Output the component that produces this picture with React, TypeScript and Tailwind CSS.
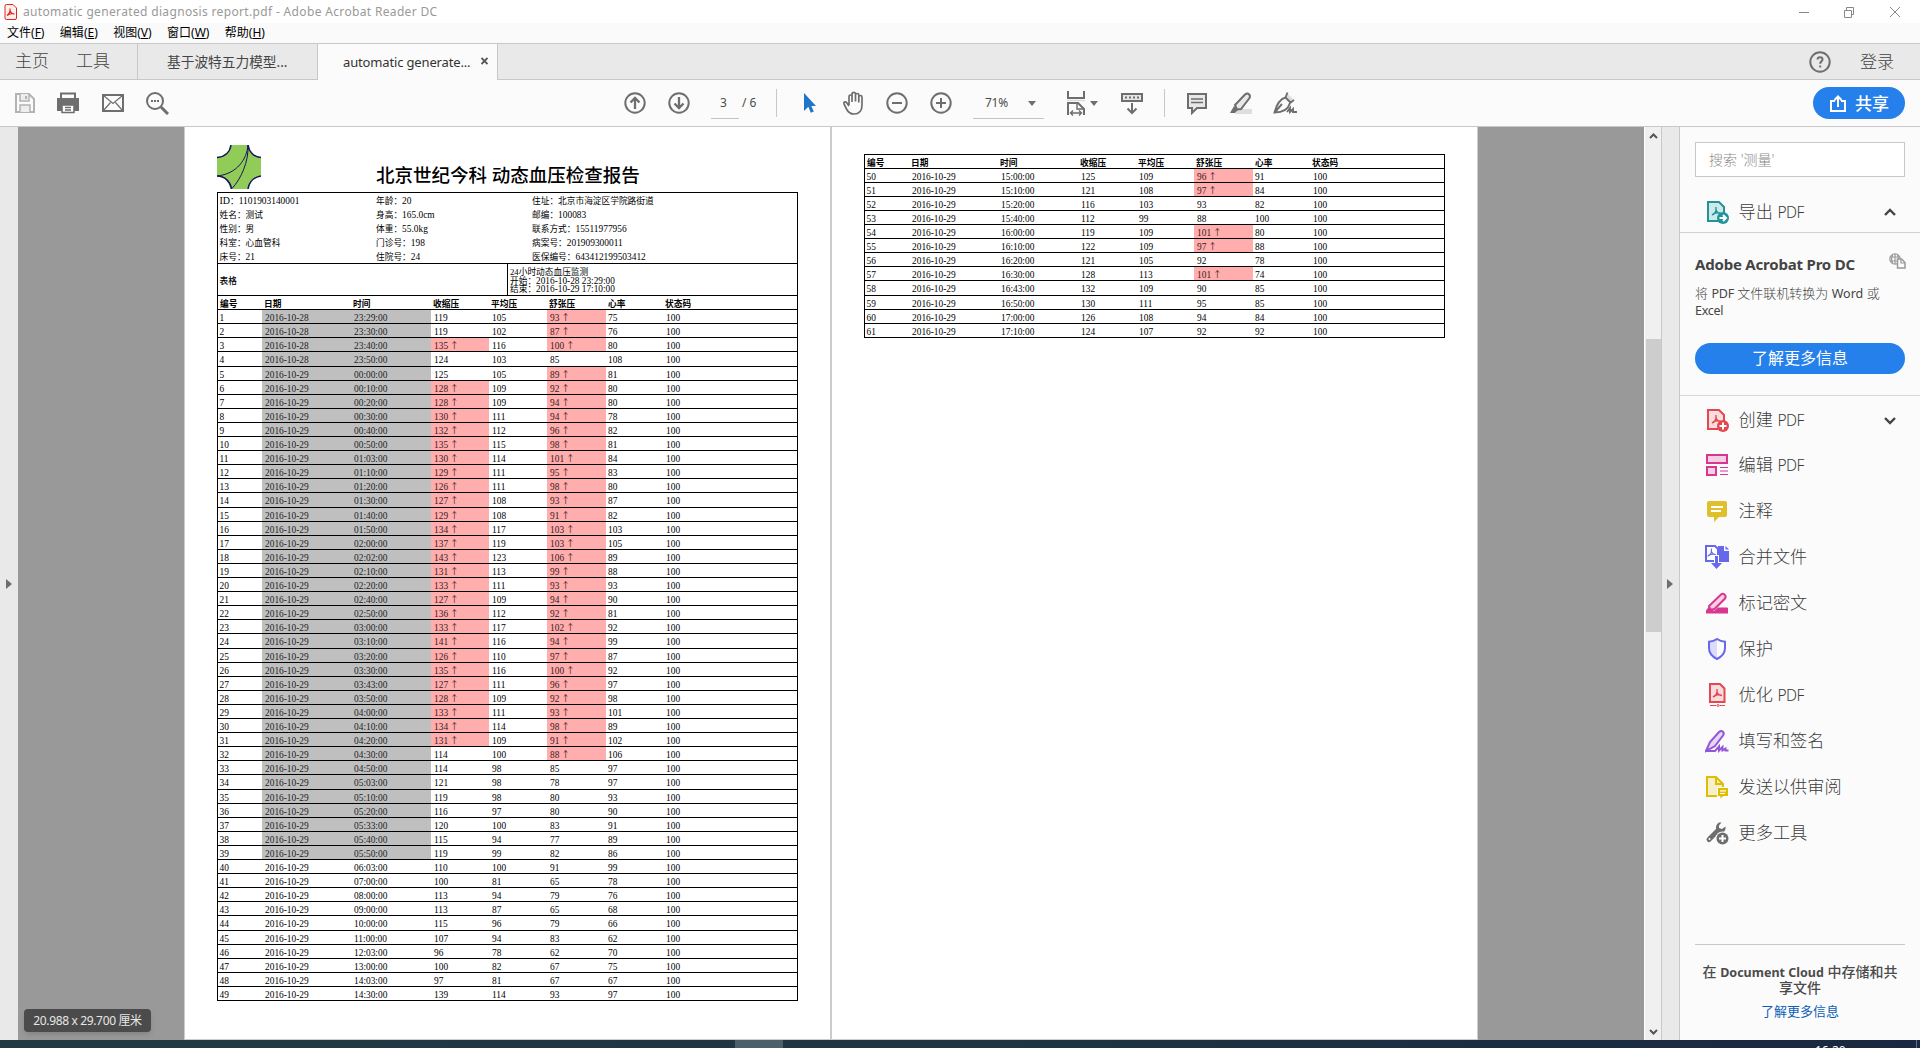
import React from "react";

type Row = [string, string, string, string, string, string];

// number is implied by position; values: time, systolic, mean, diastolic, heart rate, flags
// flags: "s" marks a raised systolic value, "d" a raised diastolic value
const readings: Row[] = [
  ["23:29:00", "119", "105", "93", "75", "d"],
  ["23:30:00", "119", "102", "87", "76", "d"],
  ["23:40:00", "135", "116", "100", "80", "sd"],
  ["23:50:00", "124", "103", "85", "108", ""],
  ["00:00:00", "125", "105", "89", "81", "d"],
  ["00:10:00", "128", "109", "92", "80", "sd"],
  ["00:20:00", "128", "109", "94", "80", "sd"],
  ["00:30:00", "130", "111", "94", "78", "sd"],
  ["00:40:00", "132", "112", "96", "82", "sd"],
  ["00:50:00", "135", "115", "98", "81", "sd"],
  ["01:03:00", "130", "114", "101", "84", "sd"],
  ["01:10:00", "129", "111", "95", "83", "sd"],
  ["01:20:00", "126", "111", "98", "80", "sd"],
  ["01:30:00", "127", "108", "93", "87", "sd"],
  ["01:40:00", "129", "108", "91", "82", "sd"],
  ["01:50:00", "134", "117", "103", "103", "sd"],
  ["02:00:00", "137", "119", "103", "105", "sd"],
  ["02:02:00", "143", "123", "106", "89", "sd"],
  ["02:10:00", "131", "113", "99", "88", "sd"],
  ["02:20:00", "133", "111", "93", "93", "sd"],
  ["02:40:00", "127", "109", "94", "90", "sd"],
  ["02:50:00", "136", "112", "92", "81", "sd"],
  ["03:00:00", "133", "117", "102", "92", "sd"],
  ["03:10:00", "141", "116", "94", "99", "sd"],
  ["03:20:00", "126", "110", "97", "87", "sd"],
  ["03:30:00", "135", "116", "100", "92", "sd"],
  ["03:43:00", "127", "111", "96", "97", "sd"],
  ["03:50:00", "128", "109", "92", "98", "sd"],
  ["04:00:00", "133", "111", "93", "101", "sd"],
  ["04:10:00", "134", "114", "98", "89", "sd"],
  ["04:20:00", "131", "109", "91", "102", "sd"],
  ["04:30:00", "114", "100", "88", "106", "d"],
  ["04:50:00", "114", "98", "85", "97", ""],
  ["05:03:00", "121", "98", "78", "97", ""],
  ["05:10:00", "119", "98", "80", "93", ""],
  ["05:20:00", "116", "97", "80", "90", ""],
  ["05:33:00", "120", "100", "83", "91", ""],
  ["05:40:00", "115", "94", "77", "89", ""],
  ["05:50:00", "119", "99", "82", "86", ""],
  ["06:03:00", "110", "100", "91", "99", ""],
  ["07:00:00", "100", "81", "65", "78", ""],
  ["08:00:00", "113", "94", "79", "76", ""],
  ["09:00:00", "113", "87", "65", "68", ""],
  ["10:00:00", "115", "96", "79", "66", ""],
  ["11:00:00", "107", "94", "83", "62", ""],
  ["12:03:00", "96", "78", "62", "70", ""],
  ["13:00:00", "100", "82", "67", "75", ""],
  ["14:03:00", "97", "81", "67", "67", ""],
  ["14:30:00", "139", "114", "93", "97", ""],
  ["15:00:00", "125", "109", "96", "91", "d"],
  ["15:10:00", "121", "108", "97", "84", "d"],
  ["15:20:00", "116", "103", "93", "82", ""],
  ["15:40:00", "112", "99", "88", "100", ""],
  ["16:00:00", "119", "109", "101", "80", "d"],
  ["16:10:00", "122", "109", "97", "88", "d"],
  ["16:20:00", "121", "105", "92", "78", ""],
  ["16:30:00", "128", "113", "101", "74", "d"],
  ["16:43:00", "132", "109", "90", "85", ""],
  ["16:50:00", "130", "111", "95", "85", ""],
  ["17:00:00", "126", "108", "94", "84", ""],
  ["17:10:00", "124", "107", "92", "92", ""],
];

const columns = "grid grid-cols-[44px_89px_80px_58px_58px_59px_57px_1fr]";

function Up() {
  return <span className="font-['Noto_Sans_CJK_SC'] text-[8.7px] leading-none"> ↑</span>;
}

// phase shifts where the 14.1px row pitch rounds up to a taller row
function Table({ from, to, phase }: { from: number; to: number; phase: number }) {
  const edge = (i: number) => Math.floor((i * 141) / 10 + phase);
  const cell = "min-h-0 overflow-hidden whitespace-nowrap pl-[3px] pt-px leading-[14px]";
  return (
    <div className="text-[9.4px] text-black">
      <div className={columns + " h-[14px] border-b border-black text-[8.7px] font-bold"}>
        {["编号", "日期", "时间", "收缩压", "平均压", "舒张压", "心率", "状态码"].map((h) => (
          <div key={h} className="min-h-0 pl-[2px] pt-px leading-[14px]">{h}</div>
        ))}
      </div>
      {readings.slice(from, to).map((r, i) => {
        const n = from + i + 1;
        const night = n <= 39 ? " bg-[#bfbfbf] text-[#222]" : "";
        const high = (on: boolean) => (on ? " bg-[#ffadad] text-[#3c1a20]" : "");
        return (
          <div
            key={n}
            className={columns + " grid-rows-[100%] border-b border-black last:border-b-0"}
            style={{ height: edge(i + 2) - edge(i + 1) - (n === to ? 1 : 0) }}
          >
            <div className="pl-[1.5px] pt-px leading-[14px]">{n}</div>
            <div className={cell + night}>{n <= 4 ? "2016-10-28" : "2016-10-29"}</div>
            <div className={cell + night}>{r[0]}</div>
            <div className={cell + high(r[5].includes("s"))}>{r[1]}{r[5].includes("s") && <Up />}</div>
            <div className={cell}>{r[2]}</div>
            <div className={cell + high(r[5].includes("d"))}>{r[3]}{r[5].includes("d") && <Up />}</div>
            <div className="pl-[2px] pt-px leading-[14px]">{r[4]}</div>
            <div className={cell}>100</div>
          </div>
        );
      })}
    </div>
  );
}

function Info({ items }: { items: [string, string][] }) {
  return (
    <div className="text-[8.7px] leading-[14px]">
      {items.map(([k, v]) => (
        <div key={k} className="h-[14px] whitespace-nowrap">
          <span className={k === "ID" ? "text-[10px]" : ""}>{k}</span>：<span className={/^[\x00-\x7f]+$/.test(v) ? "text-[9.4px]" : ""}>{v}</span>
        </div>
      ))}
    </div>
  );
}

function Svg({ w = 24, h = 24, children, c = "#6e6e6e" }: { w?: number; h?: number; children: React.ReactNode; c?: string }) {
  return (
    <svg width={w} height={h} viewBox={`0 0 ${w} ${h}`} fill="none" stroke={c} strokeWidth="2" className="block shrink-0">
      {children}
    </svg>
  );
}

const acro = "M8 15c2.500-1 4.500-4 4-8M12 10c1 2.500 3 3.500 5 3.500M8 15c1.500-2 5-2.500 8-2";

function Toolbar() {
  return (
    <div className="flex h-[47px] shrink-0 items-center border-b border-[#c8c8c8] bg-[#fbfbfb]">
      <div className="flex w-[624px] items-center pl-[13px]">
        <Svg c="#b3b3b3"><path d="M3 3h13l5 5v13H3z" /><path d="M7 3v7h9V3M7 21v-7h10v7" strokeWidth="1.500" fill="#eee" /><path d="M13 5v3" /></Svg>
        <div className="w-[19px]" />
        <Svg><path d="M5 7V2.500h14V7" /><path d="M2 8h20v11h-3v-5H5v5H2z" fill="#6e6e6e" /><path d="M6 14h12v7.500H6zM9 16.500h6M9 19h6" strokeWidth="1.500" fill="#fff" /></Svg>
        <div className="w-[21px]" />
        <Svg><path d="M2 4h20v16H2z" /><path d="M2.500 4.500l9.500 8 9.500-8M2.500 19.500l7-8M21.500 19.500l-7-8" strokeWidth="1.200" /></Svg>
        <div className="w-[20px]" />
        <Svg><circle cx="10" cy="10" r="8" /><path d="M16 16l7 7" strokeWidth="3" /><path d="M6 10h2M9 10h2M12 10h2" /></Svg>
      </div>
      <Svg w={22} h={22}><circle cx="11" cy="11" r="9.700" /><path d="M11 17V6M6.500 10.500L11 6l4.500 4.500" strokeWidth="2.300" /></Svg>
      <div className="w-[22px]" />
      <Svg w={22} h={22}><circle cx="11" cy="11" r="9.700" /><path d="M11 5v11M6.500 11.500L11 16l4.500-4.500" strokeWidth="2.300" /></Svg>
      <div className="ml-[21px] mt-[3px] h-[28px] w-[28px] border-b border-[#c4c4c4] pr-[3px] text-center text-[12px] leading-[23px] text-[#4b4b4b]">3</div>
      <div className="ml-[3px] w-[34px] text-[12px] leading-[20px] text-[#4b4b4b]">/ 6</div>
      <div className="h-[28px] w-px bg-[#c8c8c8]" />
      <div className="w-[26px]" />
      <Svg w={14} h={22}><path d="M1 1v18l4.300-4.200 2.500 6 3-1.300-2.500-5.500H13z" fill="#2074c9" stroke="none" /></Svg>
      <div className="w-[25px]" />
      <Svg w={24} h={24}><path d="M7 14V5.500c0-2 3-2 3 0V11M10 10V3c0-2.300 3.500-2.300 3.500 0v7.500M13.500 10V4c0-2 3.300-2 3.300 0v7.500M16.800 11V6c0-2 3.200-2 3.200 0v8c0 6-2.500 9-8 9-4 0-6-2-7.500-5L2 13c-.8-2.200 1.600-3 2.800-1.200L7 15" strokeWidth="1.700" /></Svg>
      <div className="w-[20px]" />
      <Svg w={22} h={22}><circle cx="11" cy="11" r="9.700" /><path d="M6 11h10" /></Svg>
      <div className="w-[22px]" />
      <Svg w={22} h={22}><circle cx="11" cy="11" r="9.700" /><path d="M6 11h10M11 6v10" /></Svg>
      <div className="ml-[21px] mt-[3px] flex h-[28px] w-[71px] items-start justify-between border-b border-[#c4c4c4] pl-[12px] pr-[8px] text-[12px] leading-[23px] tracking-[-0.3px] text-[#4b4b4b]">
        71%<svg width="8" height="5" className="mt-[10px]"><path d="M0 0h8L4 5z" fill="#6e6e6e" /></svg>
      </div>
      <div className="w-[22px]" />
      <Svg w={20} h={26}><path d="M2 1v7h16V1M2 25V13h10l6 6v6" /><path d="M1 10.500h18" stroke="#ddd" strokeWidth="1.500" /><path d="M11 13v6h7M5 23h10M7 20.500L4.500 23 7 25.500M13 20.500l2.500 2.500-2.500 2.500" strokeWidth="1.400" /></Svg>
      <svg width="8" height="5" className="ml-[4px]"><path d="M0 0h8L4 5z" fill="#6e6e6e" /></svg>
      <div className="w-[22px]" />
      <Svg w={24} h={24}><path d="M2 3h20v7H2z" fill="#e5e5e5" /><path d="M5 6.500h14" strokeDasharray="2 2" /><path d="M12 12v10M7.500 17.500L12 22l4.500-4.500" /></Svg>
      <div className="w-[20px]" />
      <div className="h-[28px] w-px bg-[#c8c8c8]" />
      <div className="w-[20px]" />
      <Svg w={24} h={24}><path d="M3 3h18v14h-9l-5 5v-5H3z" fill="#e8e8e8" /><path d="M6 8h12M6 11.500h12" strokeWidth="1.500" /></Svg>
      <div className="w-[20px]" />
      <Svg w={24} h={24}><path d="M10 18h13v5H6z" fill="#dedede" stroke="none" /><path d="M6 14L16 3.500c3-2.500 6 .5 4.500 3.500L12 18l-4 .5z" fill="#e8e8e8" /><path d="M5 15l-4 7h5l3-3z" fill="#6e6e6e" stroke="none" /></Svg>
      <div className="w-[20px]" />
      <Svg w={25} h={24}><path d="M14 2l7 7-4 2-5-5z" fill="#ddd" stroke="none" /><path d="M14.500 1.500l-2 5C7 8 4 12 1.500 21.500 9 21.500 15 19 17 12l4-3M12.500 6.500l5 5M2 21l7-8" strokeWidth="1.900" /><path d="M14 21l3-4v4l3-3v3h4" strokeWidth="1.900" /></Svg>
      <div className="ml-auto mr-[15px] flex h-[32px] w-[92px] items-center rounded-full bg-[#2680eb] pl-[17px] text-[17px] font-medium text-white">
        <svg width="16" height="17" fill="none" stroke="white" strokeWidth="2"><path d="M5 6H1v10h14V6h-4M8 12V1.500M4.500 5L8 1.500 11.500 5" /></svg>
        <span className="ml-[9px] leading-none">共享</span>
      </div>
    </div>
  );
}

function Tool({ icon, label, chevron }: { icon: React.ReactNode; label: string; chevron?: "up" | "down" }) {
  return (
    <div className="flex h-[46px] shrink-0 items-center pl-[25px] text-[17.2px] font-light leading-[24px] text-[#3c3c3c]">
      {icon}
      <span className="ml-[9.500px] whitespace-nowrap">
        {label.split(" ")[0]}
        {label.includes(" ") && <span className="ml-[4.500px] font-['Noto_Sans'] text-[15.500px] font-light tracking-[-0.5px]">PDF</span>}
      </span>
      {chevron && (
        <svg width="14" height="9" fill="none" stroke="#444" strokeWidth="2.400" className="ml-auto mr-[23px]">
          <path d={chevron === "up" ? "M2 7l5-5 5 5" : "M2 2l5 5 5-5"} />
        </svg>
      )}
    </div>
  );
}

function Sidebar() {
  const plus = "M16.500 13v7M13 16.500h7";
  return (
    <div className="flex w-[240px] shrink-0 flex-col bg-[#fbfbfb]">
      <div className="mx-[15px] mt-[15px] h-[35px] shrink-0 border border-[#c8c8c8] bg-white pl-[13px] text-[14px] font-light leading-[33px] text-[#8a8a8a]">搜索 '测量'</div>
      <div className="mt-[12px] h-[44px] border-b border-[#d0d0d0]">
        <Tool label="导出 PDF" chevron="up" icon={
          <Svg c="#209499"><path d="M3 2h11l5 5v14H3z" fill="#cfe9ea" /><path d={acro} strokeWidth="1.400" transform="translate(-1 0)" /><circle cx="18" cy="18" r="6" fill="#209499" stroke="none" /><path d="M14.500 18h6M18 15l3 3-3 3" stroke="#fff" /></Svg>} />
      </div>
      <div className="mt-[21px] flex pl-[15px]">
        <div className="w-[194px] whitespace-nowrap font-['Noto_Sans'] text-[15px] font-bold leading-[20px] tracking-[-0.2px] text-[#444]">Adobe Acrobat Pro DC</div>
        <svg width="17" height="16" viewBox="0 0 17 16" fill="none" stroke="#999" strokeWidth="1.200" className="-mt-px">
          <circle cx="6" cy="6" r="5.200" /><path d="M1 4h10M1 8h7M6 1v10M3.500 2c-1.500 3-1.500 5 0 8M8.500 2c1 2 1.200 3 1 4" /><path d="M8.500 6h4l3.500 3.500V15H8.500z" fill="#fbfbfb" strokeWidth="1.500" /><path d="M12 6v4h4" />
        </svg>
      </div>
      <div className="ml-[15px] mt-[11px] w-[200px] text-[13px] font-light leading-[17px] text-[#444]">
        将 <span className="font-['Noto_Sans'] text-[12.500px] font-normal tracking-[-0.2px]">PDF</span> 文件联机转换为 <span className="font-['Noto_Sans'] text-[12.500px] font-normal">Word</span> 或<br />
        <span className="font-['Noto_Sans'] text-[12.500px] font-normal tracking-[-0.3px]">Excel</span>
      </div>
      <div className="mx-[15px] mt-[24px] h-[31px] rounded-full bg-[#2680eb] text-center text-[16px] leading-[30px] text-white">了解更多信息</div>
      <div className="mt-[21px] h-px bg-[#d8d8d8]" />
      <div className="flex flex-col">
        <div className="-mb-px pt-px">
          <Tool label="创建 PDF" chevron="down" icon={
            <Svg c="#e34850"><path d="M3 2h11l5 5v14H3z" fill="#f9dcdd" /><path d={acro} strokeWidth="1.400" transform="translate(-1 0)" /><circle cx="18" cy="18" r="6" fill="#e34850" stroke="none" /><path d={plus} stroke="#fff" transform="translate(1.500 1.500)" /></Svg>} />
        </div>
        <Tool label="编辑 PDF" icon={
          <Svg c="#d83790"><path d="M2 2h20v8H2zM2 14h9v8H2z" fill="#f5cfe3" /><path d="M15 14.500h8M15 18h8M15 21.500h8" strokeWidth="1.200" /></Svg>} />
        <Tool label="注释" icon={
          <Svg c="none"><path d="M3 2h16a2 2 0 012 2v12a2 2 0 01-2 2h-6l-5 5v-5H3a2 2 0 01-2-2V4a2 2 0 012-2z" fill="#dfbf2b" transform="translate(1 0)" /><path d="M6 8h12M6 12h10" stroke="#fff" /></Svg>} />
        <Tool label="合并文件" icon={
          <Svg c="#6767ec"><path d="M1 1h9l3 3v12H1z" fill="#fff" /><path d={acro} strokeWidth="1.200" transform="translate(-5 -3) scale(.95)" /><path d="M13 1h6v5h5v11H13z" fill="#6767ec" stroke="none" /><path d="M20.500 1l3.500 3.500h-3.500z" fill="#6767ec" stroke="none" /><path d="M11.500 10v9" stroke="#fff" strokeWidth="5" /><path d="M11.500 11v8" strokeWidth="3" /><path d="M6 18h11l-5.500 6z" fill="#6767ec" stroke="none" /></Svg>} />
        <Tool label="标记密文" icon={
          <Svg c="#d83790"><path d="M5 19l-1-4L16 3.500c2.500-2 6 1 4 4L9.500 18z" fill="#f5cfe3" /><path d="M1 22.500v-3l3-4 5 4.500 4-3.500h9a1 1 0 011 1v5z" fill="#d83790" stroke="none" /></Svg>} />
        <Tool label="保护" icon={
          <Svg c="#6767ec"><path d="M12 2.500v19C7 19 4 16.500 4 12V5c3 0 6-1 8-2.500z" fill="#dcdcfa" stroke="none" /><path d="M12 2c2.500 1.700 5 2.500 8 2.700V11c0 5.500-3 8.500-8 11-5-2.500-8-5.500-8-11V4.700C7 4.500 9.500 3.700 12 2z" /></Svg>} />
        <Tool label="优化 PDF" icon={
          <Svg c="#e34850"><path d="M5 1h10l4.500 4.500V19H5z" fill="#f9dcdd" /><path d={acro} strokeWidth="1.400" transform="translate(0 -1)" /><path d="M5 22.500h6M14.500 22.500H20" strokeWidth="1" /><circle cx="13" cy="22.500" r="1" strokeWidth="1" /></Svg>} />
        <Tool label="填写和签名" icon={
          <Svg c="#9256d9"><path d="M1 22l4-9 9-10c3-2.500 6 .5 4 3.500L10 17z" fill="#e6d8f6" /><path d="M1 22h9l4-4.500v4l3.500-3.500v3.500l3-2v2h3" /></Svg>} />
        <Tool label="发送以供审阅" icon={
          <Svg c="#ddbe00"><path d="M2 2h9l7 7v12H2z" fill="#f7efc9" /><path d="M11 2v7h7" /><path d="M12.500 12.500h11v9H18l-3 3v-3h-2.500z" fill="#ddbe00" stroke="#fbfbfb" strokeWidth="1" /><path d="M15 15.800h6M15 18.500h5" stroke="#fff" strokeWidth="1.200" /></Svg>} />
        <Tool label="更多工具" icon={
          <Svg><path d="M4 18.500L13 9.500" strokeWidth="5" strokeLinecap="round" /><path d="M14 1.500c-4 2-4 8 0 10 4 1 7-1 6.500-6L17 8l-3-1 0-2.500 2.500-3z" fill="#6e6e6e" stroke="none" /><circle cx="4.500" cy="18" r="1" fill="#fff" stroke="none" /><circle cx="17.500" cy="17.500" r="7" fill="#fbfbfb" stroke="none" /><circle cx="17.500" cy="17.500" r="6" fill="#6e6e6e" stroke="none" /><path d={plus} stroke="#fff" transform="translate(1 1)" /></Svg>} />
      </div>
      <div className="mx-[15px] mt-auto border-t border-[#c8c8c8] pt-[20px] text-center text-[14px] font-medium leading-[14.500px] text-[#4b4b4b]">
        在 <span className="font-['Noto_Sans'] text-[12.500px] font-bold">Document Cloud</span> 中存储和共<br />享文件
      </div>
      <div className="mb-[21px] mt-[8px] text-center text-[13px] leading-[16px] text-[#0d5fb8]">了解更多信息</div>
    </div>
  );
}

export default function App() {
  const menus = [["文件", "F"], ["编辑", "E"], ["视图", "V"], ["窗口", "W"], ["帮助", "H"]];
  return (
    <div className="flex h-[1048px] w-[1920px] flex-col overflow-hidden bg-white font-['Noto_Sans','Noto_Sans_CJK_SC',sans-serif]">
      <div className="flex h-[23px] shrink-0 items-center pl-[4px]">
        <svg width="13" height="16" viewBox="0 0 13 16" fill="none" stroke="#e1251b"><path d="M1 2a1.500 1.500 0 011.500-1.500H9l3.500 3.500v10a1.500 1.500 0 01-1.500 1.500H2.500A1.500 1.500 0 011 14z" fill="#fff0ef" /><path d="M3 11.500C5 10 6.500 7 6 4.500M6 7c1 2 2.500 3 4.500 3M3 11.500c2-1.500 5-2 7-1.500" strokeWidth="1.200" /></svg>
        <span className="ml-[6px] whitespace-nowrap text-[12px] tracking-[0.34px] text-[#999]">automatic generated diagnosis report.pdf - Adobe Acrobat Reader DC</span>
        <svg width="104" height="12" fill="none" stroke="#888" className="ml-auto mr-[18px]"><path d="M1 6.500h10M46.500 4.500h7v7h-7zM48.500 4V1.500h7v7H54M92 1l10 10M102 1L92 11" /></svg>
      </div>
      <div className="flex h-[20px] shrink-0 bg-[#fafafa] pl-[7px] text-[12px] leading-[20px] text-black">
        {menus.map(([t, k]) => (
          <div key={k} className="mr-[15.400px] whitespace-nowrap">{t}(<span className="underline">{k}</span>)</div>
        ))}
      </div>
      <div className="flex h-[37px] shrink-0 border-y border-[#c8c8c8] bg-[#e9e9e9] leading-[34px] text-[#444]">
        <div className="flex w-[137px] gap-[27px] pl-[15px] text-[17px] font-light"><span>主页</span><span>工具</span></div>
        <div className="w-[180px] border-l border-[#c8c8c8] pl-[29px] pt-px text-[13.700px]">基于波特五力模型...</div>
        <div className="-mb-px flex w-[181px] items-center border-x border-[#c8c8c8] bg-[#fbfbfb] pl-[25px] text-[13px] tracking-[-0.15px] text-[#333]">
          <span className="w-[138px] whitespace-nowrap">automatic generate...</span>
          <svg width="7" height="8" stroke="#555" strokeWidth="1.800" className="-mt-[2px]"><path d="M.5 1l6 6M6.500 1l-6 6" /></svg>
        </div>
        <div className="ml-auto flex items-center">
          <Svg w={22} h={22}><circle cx="11" cy="11" r="9.700" /><path d="M8.500 8.500c.3-3 5-2.700 5 0 0 1.700-2.300 2-2.300 4.200M11.200 14.500v2" /></Svg>
          <span className="ml-[29px] mr-[26px] text-[17px] font-light">登录</span>
        </div>
      </div>
      <Toolbar />
      <div className="flex h-[913px] shrink-0">
        <div className="flex w-[18px] items-center bg-[#e9e9e9] pl-[6px]"><svg width="6" height="10"><path d="M0 0l6 5-6 5z" fill="#6e6e6e" /></svg></div>
        <div className="relative flex w-[1626px] bg-[#999] pl-[166px] font-['Liberation_Serif','Noto_Sans_CJK_SC',serif] text-black">
          <div className="h-full w-[646px] border-b border-l border-[#ccc] bg-white pl-[32px]">
            <div className="flex h-[65px] items-start">
              <svg width="44" height="44" viewBox="0 0 44 44" className="mt-[18px] shrink-0" fill="none" stroke="#14145a" strokeWidth="1.500">
                <path d="M14 0H31C32 7 37 12 44 12.500V31C37 32 32 37 31 44H14.500C13.500 37 8 31 0 31V12.500C8 12 13 7 14 0z" fill="#92cc58" stroke="none" />
                <path d="M0 12.500C8 12 13 7 14 0M31 0C32 7 37 12 44 12.500M0 31c8 0 13.500 6 14.500 13M44 31C37 32 32 37 31 44" /><path d="M31 0C30 14 20 29 0 31M31 0C32 16 24 34 15 43.500" strokeWidth="1" />
              </svg>
              <div className="ml-[115px] mt-[35px] whitespace-nowrap text-[18.500px] font-medium leading-[28px]">北京世纪今科 动态血压检查报告</div>
            </div>
            <div className="w-[581px] border border-black">
              <div className="flex h-[70px] pl-[1.500px] pt-px">
                <div className="w-[156.500px]"><Info items={[["ID", "1101903140001"], ["姓名", "测试"], ["性别", "男"], ["科室", "心血管科"], ["床号", "21"]]} /></div>
                <div className="w-[156px]"><Info items={[["年龄", "20"], ["身高", "165.0cm"], ["体重", "55.0kg"], ["门诊号", "198"], ["住院号", "24"]]} /></div>
                <Info items={[["住址", "北京市海淀区学院路街道"], ["邮编", "100083"], ["联系方式", "15511977956"], ["病案号", "201909300011"], ["医保编号", "643412199503412"]]} />
              </div>
              <div className="flex h-[33px] border-y border-black text-[8.700px]">
                <div className="w-[289px] pl-[1.500px] font-medium leading-[34px]">表格</div>
                <div className="flex-1 border-l border-black pl-[2px] pt-[4px] leading-[8.600px]">
                  24小时动态血压监测<br />开始：<span className="text-[9.300px]">2016-10-28 23:29:00</span><br />结束：<span className="text-[9.300px]">2016-10-29 17:10:00</span>
                </div>
              </div>
              <Table from={0} to={49} phase={0.5} />
            </div>
          </div>
          <div className="w-[2px] bg-[#ccc]" />
          <div className="h-full w-[646px] border-b border-r border-[#ccc] bg-white pl-[32px] pt-[27px]">
            <div className="w-[581px] border border-black"><Table from={49} to={61} phase={0} /></div>
          </div>
          <div className="absolute left-[6px] top-[882px] h-[23px] w-[127px] rounded bg-[#4b4b4b] text-center font-['Noto_Sans','Noto_Sans_CJK_SC',sans-serif] text-[12px] leading-[23px] tracking-[-0.35px] text-[#e6e6e6] shadow-md">20.988 x 29.700 厘米</div>
        </div>
        <div className="flex w-[18px] flex-col items-center border-x border-l-white border-r-[#c8c8c8] bg-[#f0f0f0]">
          <svg width="9" height="6" fill="none" stroke="#555" strokeWidth="2" className="mt-[6px]"><path d="M1 5l3.500-3.500L8 5" /></svg>
          <div className="mt-[200px] h-[293px] w-[15px] bg-[#cdcdcd]" />
          <svg width="9" height="6" fill="none" stroke="#555" strokeWidth="2" className="mb-[5px] mt-auto"><path d="M1 1l3.500 3.500L8 1" /></svg>
        </div>
        <div className="flex w-[18px] items-center border-r border-[#c8c8c8] bg-[#e9e9e9] pl-[5px]"><svg width="6" height="10"><path d="M0 0l6 5-6 5z" fill="#6e6e6e" /></svg></div>
        <Sidebar />
      </div>
      <div className="flex h-[8px] shrink-0 overflow-hidden bg-gradient-to-r from-[#203a43] via-[#1f3542] to-[#1a2740]">
        <div className="ml-[735px] w-[48px] bg-[#4d6069]" />
        <div className="ml-[1032px] text-[12px] leading-[22px] text-white">16:20</div>
        <div className="ml-auto mr-[3px] w-px bg-[#65708a]" />
      </div>
    </div>
  );
}
